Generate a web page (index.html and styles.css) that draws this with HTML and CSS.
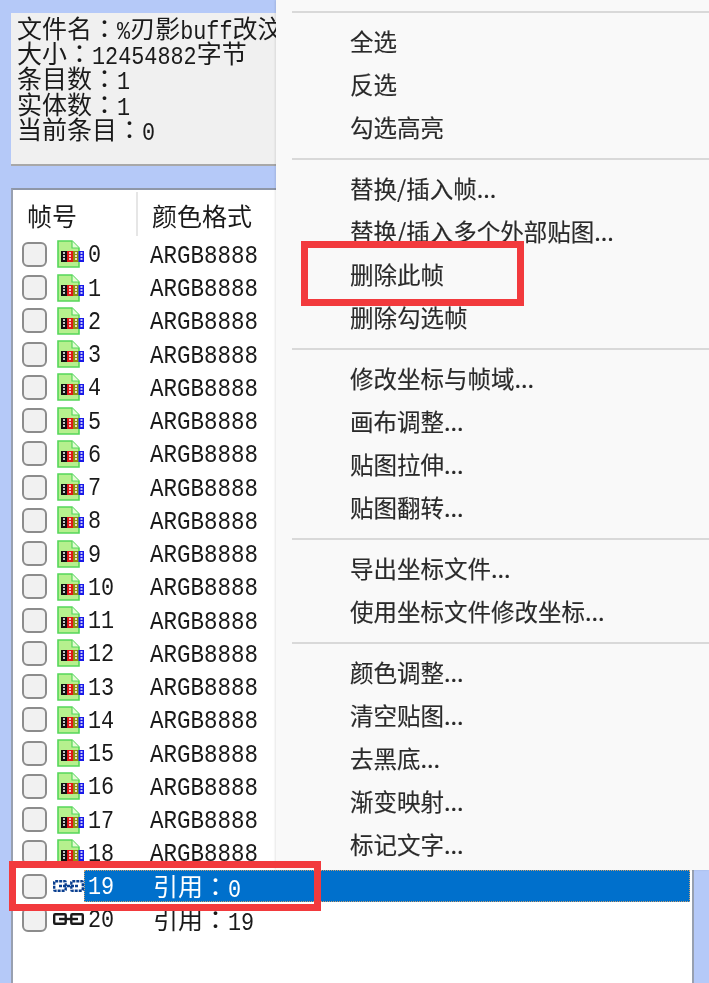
FILE: index.html
```html
<!DOCTYPE html>
<html lang="zh">
<head>
<meta charset="utf-8">
<title>帧列表</title>
<link rel="stylesheet" href="styles.css">
</head>
<body>
<svg class="defs" width="0" height="0" aria-hidden="true">
  <symbol id="tex" viewBox="0 0 27 28">
    <path d="M1 1H15L22 8V27H1Z" fill="#b6f08e" stroke="#55d65a" stroke-width="1.6"/>
    <path d="M15 1V8H22" fill="#e6fbd6" stroke="#55d65a" stroke-width="1.2"/>
    <rect x="4" y="11" width="6" height="11" fill="#111"/>
    <rect x="10" y="11" width="6" height="11" fill="#e01818"/>
    <rect x="16" y="11" width="5.5" height="11" fill="#8f8f10"/>
    <rect x="21.5" y="11" width="5.5" height="11" fill="#1818e8"/>
    <path d="M6 13h2M6 16h2M6 19h2M12 13h2M12 16h2M12 19h2M18 13h2M18 16h2M18 19h2M23.5 13h2M23.5 16h2M23.5 19h2" stroke="#fff" stroke-width="1.4"/>
  </symbol>
  <symbol id="link" viewBox="0 0 31 12">
    <rect x="1.2" y="1.2" width="11.5" height="9.6" rx="1" fill="none" stroke-width="2.4"/>
    <rect x="18.3" y="1.2" width="11.5" height="9.6" rx="1" fill="none" stroke-width="2.4"/>
    <path d="M6 6H25" stroke-width="2.4"/>
  </symbol>
</svg>
<div class="page">
  <section class="info">
    <div class="info-line">文件名<span class="colon" lang="zh-TW">：</span><span class="lat">%</span>刃影<span class="lat">buff</span>改汶</div>
    <div class="info-line">大小<span class="colon" lang="zh-TW">：</span><span class="lat">12454882</span>字节</div>
    <div class="info-line">条目数<span class="colon" lang="zh-TW">：</span><span class="lat">1</span></div>
    <div class="info-line">实体数<span class="colon" lang="zh-TW">：</span><span class="lat">1</span></div>
    <div class="info-line">当前条目<span class="colon" lang="zh-TW">：</span><span class="lat">0</span></div>
  </section>
  <section class="list">
    <div class="list-head">
      <div class="head-frame">帧号</div>
      <div class="head-format">颜色格式</div>
    </div>
    <div class="row"><span class="check"></span><svg class="icon"><use href="#tex"/></svg><div class="cell"><span class="num">0</span><span class="fmt">ARGB8888</span></div></div>
    <div class="row"><span class="check"></span><svg class="icon"><use href="#tex"/></svg><div class="cell"><span class="num">1</span><span class="fmt">ARGB8888</span></div></div>
    <div class="row"><span class="check"></span><svg class="icon"><use href="#tex"/></svg><div class="cell"><span class="num">2</span><span class="fmt">ARGB8888</span></div></div>
    <div class="row"><span class="check"></span><svg class="icon"><use href="#tex"/></svg><div class="cell"><span class="num">3</span><span class="fmt">ARGB8888</span></div></div>
    <div class="row"><span class="check"></span><svg class="icon"><use href="#tex"/></svg><div class="cell"><span class="num">4</span><span class="fmt">ARGB8888</span></div></div>
    <div class="row"><span class="check"></span><svg class="icon"><use href="#tex"/></svg><div class="cell"><span class="num">5</span><span class="fmt">ARGB8888</span></div></div>
    <div class="row"><span class="check"></span><svg class="icon"><use href="#tex"/></svg><div class="cell"><span class="num">6</span><span class="fmt">ARGB8888</span></div></div>
    <div class="row"><span class="check"></span><svg class="icon"><use href="#tex"/></svg><div class="cell"><span class="num">7</span><span class="fmt">ARGB8888</span></div></div>
    <div class="row"><span class="check"></span><svg class="icon"><use href="#tex"/></svg><div class="cell"><span class="num">8</span><span class="fmt">ARGB8888</span></div></div>
    <div class="row"><span class="check"></span><svg class="icon"><use href="#tex"/></svg><div class="cell"><span class="num">9</span><span class="fmt">ARGB8888</span></div></div>
    <div class="row"><span class="check"></span><svg class="icon"><use href="#tex"/></svg><div class="cell"><span class="num">10</span><span class="fmt">ARGB8888</span></div></div>
    <div class="row"><span class="check"></span><svg class="icon"><use href="#tex"/></svg><div class="cell"><span class="num">11</span><span class="fmt">ARGB8888</span></div></div>
    <div class="row"><span class="check"></span><svg class="icon"><use href="#tex"/></svg><div class="cell"><span class="num">12</span><span class="fmt">ARGB8888</span></div></div>
    <div class="row"><span class="check"></span><svg class="icon"><use href="#tex"/></svg><div class="cell"><span class="num">13</span><span class="fmt">ARGB8888</span></div></div>
    <div class="row"><span class="check"></span><svg class="icon"><use href="#tex"/></svg><div class="cell"><span class="num">14</span><span class="fmt">ARGB8888</span></div></div>
    <div class="row"><span class="check"></span><svg class="icon"><use href="#tex"/></svg><div class="cell"><span class="num">15</span><span class="fmt">ARGB8888</span></div></div>
    <div class="row"><span class="check"></span><svg class="icon"><use href="#tex"/></svg><div class="cell"><span class="num">16</span><span class="fmt">ARGB8888</span></div></div>
    <div class="row"><span class="check"></span><svg class="icon"><use href="#tex"/></svg><div class="cell"><span class="num">17</span><span class="fmt">ARGB8888</span></div></div>
    <div class="row"><span class="check"></span><svg class="icon"><use href="#tex"/></svg><div class="cell"><span class="num">18</span><span class="fmt">ARGB8888</span></div></div>
    <div class="row row-selected"><span class="check"></span><svg class="icon icon-link icon-link-selected"><use href="#link"/></svg><div class="cell"><span class="num">19</span><span class="ref">引用<span class="colon" lang="zh-TW">：</span><span class="lat">0</span></span></div></div>
    <div class="row"><span class="check"></span><svg class="icon icon-link"><use href="#link"/></svg><div class="cell"><span class="num">20</span><span class="ref">引用<span class="colon" lang="zh-TW">：</span><span class="lat">19</span></span></div></div>
  </section>
  <nav class="menu">
    <div class="sep"></div>
    <div class="item">全选</div>
    <div class="item">反选</div>
    <div class="item">勾选高亮</div>
    <div class="sep"></div>
    <div class="item">替换/插入帧...</div>
    <div class="item">替换/插入多个外部贴图...</div>
    <div class="item">删除此帧</div>
    <div class="item">删除勾选帧</div>
    <div class="sep"></div>
    <div class="item">修改坐标与帧域...</div>
    <div class="item">画布调整...</div>
    <div class="item">贴图拉伸...</div>
    <div class="item">贴图翻转...</div>
    <div class="sep"></div>
    <div class="item">导出坐标文件...</div>
    <div class="item">使用坐标文件修改坐标...</div>
    <div class="sep"></div>
    <div class="item">颜色调整...</div>
    <div class="item">清空贴图...</div>
    <div class="item">去黑底...</div>
    <div class="item">渐变映射...</div>
    <div class="item">标记文字...</div>
  </nav>
  <div class="mark mark-row"></div>
  <div class="mark mark-item"></div>
</div>
</body>
</html>
```
FILE: styles.css
```css
html, body {
  margin: 0;
  height: 100%;
  overflow: hidden;
  background: #b5c9f8;
}
.defs {
  position: absolute;
}
.page {
  position: relative;
  width: 709px;
  height: 983px;
  box-sizing: border-box;
  padding: 13px 15px 0 11px;
  overflow: hidden;
  background: #b5c9f8;
  color: #1a1a1a;
  font-family: "Noto Sans CJK TC", sans-serif;
  font-size: 25px;
  filter: blur(0.45px);
}
.lat,
.num,
.fmt {
  display: inline-block;
  font-family: "Liberation Mono", monospace;
  transform: scaleY(1.18);
}
.lat,
.num {
  font-size: 21.8px;
}
.fmt {
  font-size: 22.5px;
}
.info {
  box-sizing: border-box;
  height: 153px;
  padding: 2px 6px;
  background: #f0f0f0;
  border-bottom: 2px solid #a8a8a8;
  overflow: hidden;
  white-space: nowrap;
}
.info-line {
  height: 25.2px;
  line-height: 25.2px;
}
.list {
  box-sizing: border-box;
  height: 800px;
  margin-top: 22px;
  background: #fff;
  border-top: 2px solid #8f97a8;
  border-left: 2px solid #98a0b0;
  border-right: 2px solid #98a0b0;
}
.list-head {
  display: flex;
  height: 47.7px;
  align-items: center;
}
.head-frame {
  box-sizing: border-box;
  width: 125px;
  height: 44px;
  padding-left: 14px;
  line-height: 46px;
  border-right: 2px solid #e6e6e6;
}
.head-format {
  padding-left: 14px;
  line-height: 46px;
  height: 44px;
}
.row {
  display: flex;
  align-items: center;
  height: 33.26px;
  padding: 0 2px 0 9px;
}
.check {
  flex: none;
  box-sizing: border-box;
  width: 25px;
  height: 25px;
  border: 2px solid #8c8c8c;
  border-radius: 6px;
  background: #f1f1f1;
}
.icon {
  flex: none;
  width: 27px;
  height: 28px;
  margin-left: 10px;
}
.icon-link {
  width: 31px;
  height: 12px;
  margin-left: 6px;
  stroke: #1a1a1a;
}
.icon-link-selected {
  stroke: #0a3f90;
  stroke-dasharray: 3 1;
}
.cell {
  flex: 1;
  box-sizing: border-box;
  display: flex;
  align-items: center;
  height: 100%;
  min-width: 0;
  padding: 3px 0 0 4px;
}
.num {
  width: 62px;
}
.ref {
  margin-top: -5px;
  padding-left: 3px;
  white-space: nowrap;
}
.row-selected .cell {
  height: 32px;
  background: #0070cc;
  color: #fff;
  outline: 1px dotted #c8a070;
  outline-offset: -1px;
}
.row-selected {
  position: relative;
  z-index: 2;
}
.menu {
  position: absolute;
  z-index: 1;
  left: 276px;
  top: 0;
  width: 433px;
  box-sizing: border-box;
  height: 870px;
  padding: 3px 0 0 16px;
  background: #f9f9f9;
  box-shadow: -1px 0 2px rgba(0, 0, 0, 0.1);
  color: #2a2a2a;
  font-family: "Noto Sans CJK SC", sans-serif;
  font-size: 23.5px;
  -webkit-text-stroke: 0.15px #2a2a2a;
}
.sep {
  height: 18px;
  background: linear-gradient(#d9d9d9, #d9d9d9) center / 100% 2px no-repeat;
}
.item {
  height: 43px;
  line-height: 41px;
  padding-left: 58px;
  white-space: nowrap;
}
.mark {
  position: absolute;
  z-index: 3;
  box-sizing: border-box;
  border: 7px solid #f23a3d;
  pointer-events: none;
}
.mark-row {
  left: 9px;
  top: 861px;
  width: 312px;
  height: 50px;
}
.mark-item {
  left: 301px;
  top: 241px;
  width: 223px;
  height: 65px;
}
```
